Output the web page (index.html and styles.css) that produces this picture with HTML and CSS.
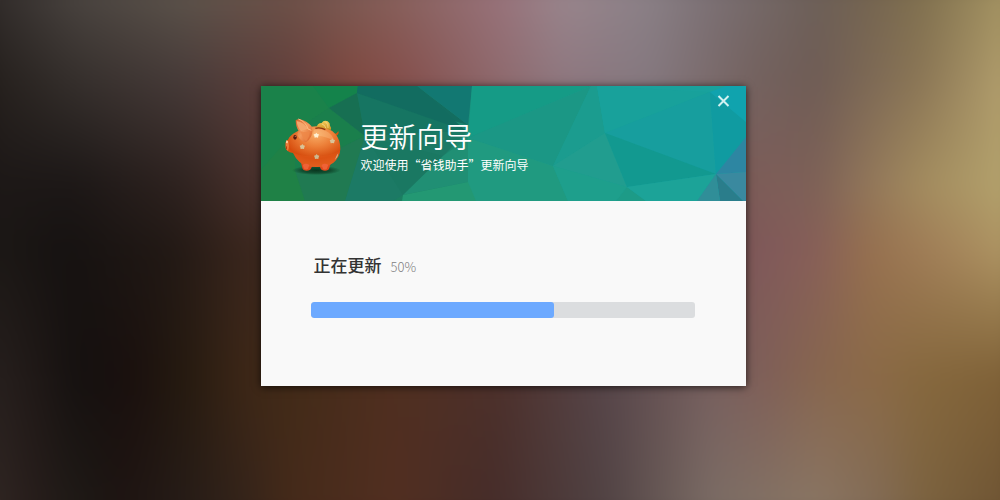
FILE: index.html
```html
<!DOCTYPE html>
<html lang="zh-CN">
<head>
    <meta charset="UTF-8">
    <meta name="viewport" content="width=device-width, initial-scale=1.0">
    <title>更新向导</title>
    <link rel="stylesheet" href="styles.css">
</head>
<body>

    <div class="backdrop" aria-hidden="true">
        <div class="bands">
            <div class="band band-6"></div>
            <div class="band band-5"></div>
            <div class="band band-4"></div>
            <div class="band band-3"></div>
            <div class="band band-2"></div>
            <div class="band band-1"></div>
        </div>
    </div>

    <main class="page">
        <section class="dialog">
            <header class="header">
                <svg class="header-bg" viewBox="0 0 485 115" preserveAspectRatio="none" aria-hidden="true">
                    <defs>
                        <linearGradient id="base">
                            <stop offset="0" stop-color="#1c8248"/>
                            <stop offset="0.2" stop-color="#1a7a56"/>
                            <stop offset="0.42" stop-color="#1d8772"/>
                            <stop offset="0.45" stop-color="#1b9a84"/>
                            <stop offset="0.7" stop-color="#1aa096"/>
                            <stop offset="1" stop-color="#109fa8"/>
                        </linearGradient>
                    </defs>
                    <rect width="485" height="115" fill="url(#base)"/>
                    <!-- left: greens -->
                    <polygon points="0,0 52,0 68,22 34,45 0,84" fill="#1a824a"/>
                    <polygon points="52,0 97,0 96,7 68,22" fill="#14834b"/>
                    <polygon points="68,22 34,45 34,84 104,50" fill="#1a7f4c"/>
                    <polygon points="0,84 34,45 34,84 44,115 0,115" fill="#1f8146"/>
                    <polygon points="34,84 104,50 84,115 44,115" fill="#207a52"/>
                    <polygon points="68,22 96,7 104,50" fill="#176f52"/>
                    <polygon points="97,0 156,0 207,39 96,7" fill="#136d60"/>
                    <polygon points="156,0 211,0 207,39" fill="#127872"/>
                    <polygon points="96,7 207,45 104,50" fill="#167562"/>
                    <polygon points="96,7 97,0 156,0 205,45" fill="#126c60"/>
                    <polygon points="104,50 207,45 182,70 142,109 132,115 84,115" fill="#1c7a65"/>
                    <polygon points="104,50 182,70 142,109" fill="#1a7862"/>
                    <!-- middle: teals -->
                    <polygon points="211,0 330,0 207,52" fill="#159b86"/>
                    <polygon points="330,0 292,80 207,52" fill="#1b9785"/>
                    <polygon points="207,52 292,80 307,115 207,115" fill="#209a80"/>
                    <polygon points="207,52 207,96 142,109 182,70" fill="#208f74"/>
                    <polygon points="142,109 207,96 215,115 141,115" fill="#239873"/>
                    <polygon points="330,0 336,0 344,47 292,80" fill="#1b9c8f"/>
                    <polygon points="344,47 366,101 292,80" fill="#219d8f"/>
                    <polygon points="292,80 366,101 355,115 307,115" fill="#1e9f8c"/>
                    <polygon points="366,101 385,115 355,115" fill="#1d9b87"/>
                    <polygon points="336,0 485,0 449,6 344,47" fill="#19a29d"/>
                    <polygon points="336,0 449,6 344,47" fill="#18a19b"/>
                    <!-- right: cyans and blues -->
                    <polygon points="449,6 455,88 344,47" fill="#179e9e"/>
                    <polygon points="344,47 455,88 366,101" fill="#129990"/>
                    <polygon points="366,101 455,88 436,115 385,115" fill="#1ca398"/>
                    <polygon points="449,6 485,36 485,51 455,88" fill="#109ba1"/>
                    <polygon points="449,6 465,0 485,0 485,36" fill="#10a3ae"/>
                    <polygon points="485,51 485,86 455,88" fill="#2d86a2"/>
                    <polygon points="455,88 485,86 485,115 482,115" fill="#3a899f"/>
                    <polygon points="455,88 482,115 459,115" fill="#2a7d8b"/>
                    <polygon points="455,88 459,115 436,115" fill="#308e98"/>
                </svg>

                <div class="header-content">
                    <svg class="logo" viewBox="18 21 180 177" aria-hidden="true">
                        <defs>
                            <radialGradient id="body" cx="0.56" cy="0.2" r="0.85">
                                <stop offset="0" stop-color="#f8ad66"/>
                                <stop offset="0.35" stop-color="#ec7f38"/>
                                <stop offset="0.7" stop-color="#d64c0d"/>
                                <stop offset="1" stop-color="#e8682a"/>
                            </radialGradient>
                            <linearGradient id="ear" x1="0" y1="0" x2="1" y2="1">
                                <stop offset="0" stop-color="#d9622b"/>
                                <stop offset="0.5" stop-color="#f39a5c"/>
                                <stop offset="1" stop-color="#d85a20"/>
                            </linearGradient>
                            <linearGradient id="coin" x1="0" y1="0" x2="0" y2="1">
                                <stop offset="0" stop-color="#f4cf5c"/>
                                <stop offset="1" stop-color="#c98a1c"/>
                            </linearGradient>
                            <radialGradient id="shade">
                                <stop offset="0" stop-color="#08331d" stop-opacity="0.95"/>
                                <stop offset="0.6" stop-color="#0b3d23" stop-opacity="0.7"/>
                                <stop offset="1" stop-color="#0b3d23" stop-opacity="0"/>
                            </radialGradient>
                            <path id="flower" d="M0-8 3-4 8-3 6 2 5 7 0 6-5 7-6 2-8-3-3-4z"/>
                        </defs>
                        <ellipse cx="115" cy="181" rx="73" ry="14" fill="url(#shade)"/>
                        <path d="M170 72q4-2 7-4l4-5 1 5q0 5-8 10z" fill="#c95a14"/>
                        <path d="M67 150l6 24q2 8 13 8t14-8l8-20z" fill="#e0481c"/>
                        <path d="M120 154l7 20q3 8 14 8t13-8l7-24z" fill="#e0481c"/>
                        <path d="M53 67q26-18 62-18 38 1 58 24 14 17 14 44-1 24-21 41-20 14-53 13-30 0-48-15-13-11-20-27-11-2-17-7-5-2-5-10V97q0-6 7-8 7-14 23-22z" fill="url(#body)"/>
                        <path d="M46 128q19 10 61 11 52 0 79-17-2 20-20 36-20 14-53 13-30 0-48-15-12-11-19-28z" fill="#e25a1a" opacity="0.5"/>
                        <path d="M74 165q9-8 20 0l-4 12q-7 3-12-1zM131 165q9-8 20 0l-5 12q-6 3-11 0z" fill="#ef6236"/>
                        <path d="M108 59q33-5 52 16 8 10 10 20-28-20-66-16z" fill="#ffd097" opacity="0.3"/>
                        <path d="M30 91q-7 2-7 8v15q1 7 7 8 6-12 0-31z" fill="#ee7a3a"/>
                        <path d="M25 91l5 3-1 6-5-1z" fill="#ffd1a2"/>
                        <path d="M24 108v9l3 2v-9z" fill="#b63e0d"/>
                        <path d="M116 54q1-15 15-15 6-10 18-5 8 5 7 13 6 7 2 14-16-8-42-7z" fill="url(#coin)"/>
                        <path d="M132 42q8 2 12 13M143 36q9 6 7 18" fill="none" stroke="#fae59a" stroke-width="2"/>
                        <path d="M112 55q15-4 30 4" fill="none" stroke="#8d350d" stroke-width="4"/>
                        <path d="M53 31q5-5 14-3 22 7 33 20 6 12 0 30-5 12-17 19-16-5-24-20-3-8 3-14-9-13-9-32z" fill="url(#ear)"/>
                        <path d="M56 33q22 4 33 23l-20 8q-12-15-13-31z" fill="#f4a76d"/>
                        <path d="M61 27q23 8 29 30l10 4" fill="none" stroke="#ffbd81" stroke-width="3"/>
                        <path d="M68 66q7 20 16 28 10-10 11-28z" fill="#ed8747" opacity="0.8"/>
                        <ellipse cx="51" cy="82" rx="5" ry="7" fill="#591a10"/>
                        <circle cx="52" cy="79" r="2" fill="#bf7456"/>
                        <use href="#flower" x="115" y="76" fill="#fff0d2"/>
                        <use href="#flower" x="163" y="93" fill="#d9c498"/>
                        <use href="#flower" x="73" y="110" fill="#d9c498"/>
                        <use href="#flower" x="116" y="140" fill="#cdb991"/>
                        <path d="M177 135l4-5-3 11-8 9z" fill="#cdb991"/>
                    </svg>
                    <div class="heading">
                        <h1 class="title">更新向导</h1>
                        <p class="subtitle">欢迎使用“省钱助手”更新向导</p>
                    </div>
                    <button class="close" type="button" aria-label="关闭">
                        <svg class="close-icon" viewBox="0 0 12 12" aria-hidden="true">
                            <path d="M1 1l10 10M11 1L1 11" stroke="currentColor" stroke-width="2"/>
                        </svg>
                    </button>
                </div>
            </header>

            <div class="content">
                <div class="status">
                    <label class="status-label" for="update">正在更新</label>
                    <span class="percent">50%</span>
                </div>
                <progress class="progress" id="update" value="63.5" max="100"></progress>
            </div>
        </section>
    </main>

</body>
</html>
```
FILE: styles.css
```css
* { box-sizing: border-box; }
body {
    display: grid;
    min-height: 100vh;
    margin: 0;
    font-family: "Liberation Sans", "Noto Sans CJK SC", sans-serif;
    background-color: #2b2625;
}

/* Soft backdrop: horizontal gradients that fade into each other from top to bottom */
.backdrop {
    grid-area: 1 / 1;
    display: grid;
    overflow: hidden;
}
.bands {
    display: grid;
    margin: -28px;
    filter: blur(14px);
}
.band { grid-area: 1 / 1; }
.band-1 {
    background: linear-gradient(90deg, #2b2625 0%, #4a4440 10%, #5c534b 20%, #6d5148 30%, #87605b 40%, #98727a 50%, #99858c 56%, #8a8086 64%, #7b7074 70%, #6c5f58 80%, #746450 85%, #80704f 90%, #ac9b66 100%);
    mask-image: linear-gradient(#000 4%, transparent 20%);
}
.band-2 {
    background: linear-gradient(90deg, #211c19 0%, #352f2c 10%, #463a38 20%, #633f3b 30%, #80483f 36%, #86504d 41%, #8f6a6e 50%, #8f7880 56%, #857980 64%, #74625f 74%, #6f5c55 80%, #8c7756 90%, #bba872 100%);
    mask-image: linear-gradient(#000 20%, transparent 38%);
}
.band-3 {
    background: linear-gradient(90deg, #1d1817 0%, #1d1817 10%, #2f2320 20%, #47302b 26%, #7d5d59 75%, #7d6157 80%, #92775a 85%, #a38c5f 90%, #b8a870 100%);
    mask-image: linear-gradient(#000 38%, transparent 50%);
}
.band-4 {
    background: linear-gradient(90deg, #1e1a17 0%, #161211 9%, #221915 19%, #3a261d 26%, #80595a 75%, #875f58 80%, #96704f 85%, #a17f58 91%, #b29b66 100%);
    mask-image: linear-gradient(#000 50%, transparent 73%);
}
.band-5 {
    background: linear-gradient(90deg, #2a2321 0%, #201917 6%, #151110 10%, #1a100e 15%, #251a10 20%, #3d2717 26%, #422b18 30%, #502f20 40%, #4d312c 50%, #57464a 60%, #77605f 70%, #7f5f58 75%, #87664f 80%, #8b6a48 85%, #86683e 90%, #7d5f35 100%);
    mask-image: linear-gradient(#000 73%, transparent 96%);
}
.band-6 {
    background: linear-gradient(90deg, #352b27 0%, #271d1b 6%, #1e1a16 10%, #1e1412 14%, #261c17 20%, #35241a 26%, #452a1a 30%, #522f21 40%, #462c29 49%, #514344 60%, #7b6c65 70%, #8a7664 80%, #826b55 86%, #7c6340 90%, #6c5130 100%);
}

.page {
    grid-area: 1 / 1;
    z-index: 1;
    padding: 86px 0 40px 6px;
}
.dialog {
    max-width: 485px;
    margin: 0 auto;
    background-color: #f9f9f9;
    box-shadow: 0 1px 8px rgba(0, 0, 0, 0.7);
}

.header { display: grid; }
.header-bg {
    grid-area: 1 / 1;
    width: 100%;
    height: 100%;
}
.header-content {
    grid-area: 1 / 1;
    z-index: 1;
    display: flex;
    align-items: flex-start;
    padding: 0 16px 25px 23px;
    color: white;
}
.logo {
    width: 60px;
    height: 59px;
    margin-top: 31px;
}
.heading {
    flex: 1;
    padding: 30px 0 0 17px;
}
.title {
    margin: 0;
    font-family: "Noto Sans CJK SC", sans-serif;
    font-size: 28px;
    font-weight: 350;
    line-height: 40px;
}
.subtitle {
    margin: 0;
    font-family: "Noto Sans CJK SC", sans-serif;
    font-size: 12px;
    line-height: 18px;
}
.close {
    display: flex;
    margin-top: 9px;
    padding: 0;
    border: none;
    background: none;
    color: #d3f1f0;
    cursor: pointer;
}
.close-icon { width: 13px; height: 12px; }

.content { padding: 52px 51px 68px 50px; }
.status {
    display: flex;
    align-items: center;
    gap: 9px;
    padding-left: 3px;
    line-height: 28px;
}
.status-label { font-size: 17px; font-weight: 500; color: #333; }
.percent {
    font-family: "Noto Sans CJK SC", sans-serif;
    font-size: 13px;
    font-weight: 300;
    color: #808080;
}
.progress {
    display: block;
    width: 100%;
    height: 16px;
    margin-top: 21px;
    border: none;
    border-radius: 3px;
    overflow: hidden;
    appearance: none;
}
.progress::-webkit-progress-bar { background-color: #dbdddf; }
.progress::-webkit-progress-value { background-color: #6ca9ff; border-radius: 3px; }
```
